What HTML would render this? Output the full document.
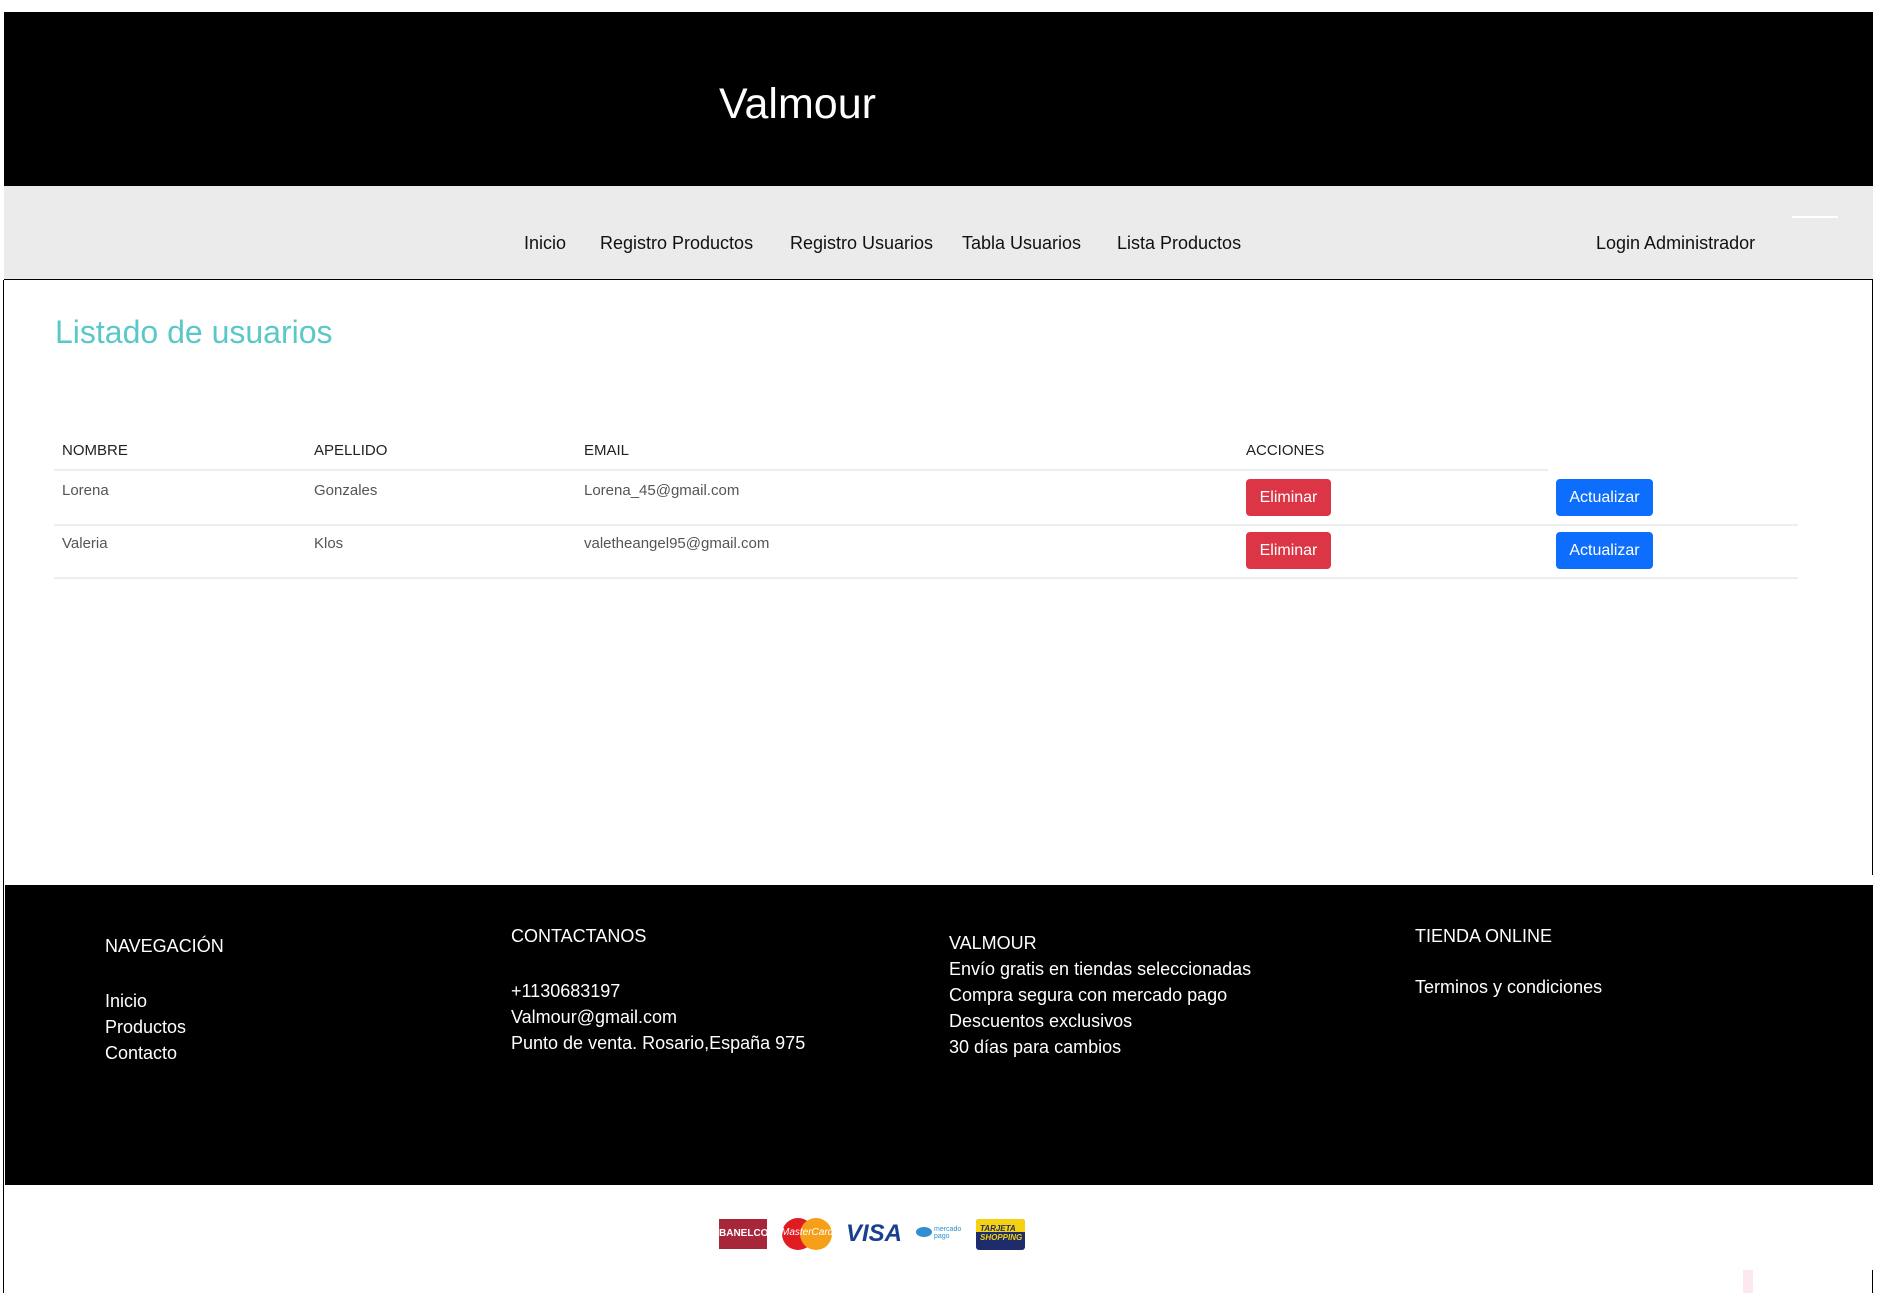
<!DOCTYPE html>
<html><head><meta charset="utf-8"><style>
*{margin:0;padding:0;box-sizing:border-box}
body{width:1877px;height:1293px;background:#fff;position:relative;overflow:hidden;font-family:"Liberation Sans","DejaVu Sans",sans-serif}
.a{position:absolute;white-space:nowrap}
#hdr{position:absolute;left:4px;top:12px;width:1869px;height:174px;background:#000}
#nav{position:absolute;left:4px;top:186px;width:1869px;height:94px;background:#ebebeb;border-bottom:1px solid #000}
.n{font-size:18px;color:#111;top:233px}
.th{font-size:15px;color:#222;top:442px}
.td{font-size:15px;color:#555}
.btn{position:absolute;height:37px;border-radius:4px;color:#fff;font-size:16px;line-height:37px;text-align:center}
.r{background:#dc3545;width:85px;left:1246px}
.b{background:#0d6efd;width:97px;left:1556px}
.line{position:absolute;height:2px;background:#eee}
#ftr{position:absolute;left:5px;top:885px;width:1868px;height:300px;background:#000}
.f{color:#fff;font-size:18px}
</style></head><body>
<div id="hdr"></div>
<div class="a" style="left:719px;top:80px;font-size:43px;color:#fff">Valmour</div>
<div id="nav"></div>
<div class="a n" style="left:524px">Inicio</div>
<div class="a n" style="left:600px">Registro Productos</div>
<div class="a n" style="left:790px">Registro Usuarios</div>
<div class="a n" style="left:962px">Tabla Usuarios</div>
<div class="a n" style="left:1117px">Lista Productos</div>
<div class="a n" style="left:1596px">Login Administrador</div>
<div class="a" style="left:1792px;top:216px;width:46px;height:2px;background:#fff"></div>
<div class="a" style="left:1872px;top:280px;width:1px;height:595px;background:#000"></div>
<div class="a" style="left:3px;top:280px;width:1px;height:1013px;background:#000"></div>
<div class="a" style="left:55px;top:314px;font-size:32px;color:#5bc8c8">Listado de usuarios</div>
<div class="a th" style="left:62px">NOMBRE</div>
<div class="a th" style="left:314px">APELLIDO</div>
<div class="a th" style="left:584px">EMAIL</div>
<div class="a th" style="left:1246px">ACCIONES</div>
<div class="line" style="left:54px;top:469px;width:1494px"></div>
<div class="a td" style="left:62px;top:482px">Lorena</div>
<div class="a td" style="left:314px;top:482px">Gonzales</div>
<div class="a td" style="left:584px;top:482px">Lorena_45@gmail.com</div>
<div class="btn r" style="top:479px">Eliminar</div>
<div class="btn b" style="top:479px">Actualizar</div>
<div class="line" style="left:54px;top:524px;width:1744px"></div>
<div class="a td" style="left:62px;top:535px">Valeria</div>
<div class="a td" style="left:314px;top:535px">Klos</div>
<div class="a td" style="left:584px;top:535px">valetheangel95@gmail.com</div>
<div class="btn r" style="top:532px">Eliminar</div>
<div class="btn b" style="top:532px">Actualizar</div>
<div class="line" style="left:54px;top:577px;width:1744px"></div>
<div id="ftr"></div>
<div class="a f" style="left:105px;top:936px">NAVEGACIÓN</div>
<div class="a f" style="left:105px;top:988px;line-height:26px">Inicio<br>Productos<br>Contacto</div>
<div class="a f" style="left:511px;top:926px">CONTACTANOS</div>
<div class="a f" style="left:511px;top:978px;line-height:26px">+1130683197<br>Valmour@gmail.com<br>Punto de venta. Rosario,España 975</div>
<div class="a f" style="left:949px;top:930px;line-height:26px">VALMOUR<br>Envío gratis en tiendas seleccionadas<br>Compra segura con mercado pago<br>Descuentos exclusivos<br>30 días para cambios</div>
<div class="a f" style="left:1415px;top:926px">TIENDA ONLINE</div>
<div class="a f" style="left:1415px;top:977px">Terminos y condiciones</div>
<div class="a" style="left:719px;top:1219px;width:48px;height:30px;background:#a8263a;color:#fff;font-size:10px;font-weight:bold;line-height:30px;text-align:center">BANELCO</div>
<div class="a" style="left:782px;top:1218px;width:32px;height:32px;border-radius:50%;background:#e01b22"></div>
<div class="a" style="left:800px;top:1218px;width:32px;height:32px;border-radius:50%;background:#f6a01a"></div>
<div class="a" style="left:781px;top:1227px;font-size:10px;color:#fff;font-style:italic">MasterCard</div>
<div class="a" style="left:846px;top:1220px;font-size:24px;font-weight:bold;font-style:italic;color:#1a3f91">VISA</div>
<div class="a" style="left:916px;top:1227px;width:16px;height:10px;border-radius:50%;background:#2e8fd1"></div>
<div class="a" style="left:934px;top:1226px;font-size:7px;color:#2e8fd1;line-height:7px">mercado<br>pago</div>
<div class="a" style="left:976px;top:1219px;width:49px;height:31px;border-radius:3px;background:#1e2c6b;overflow:hidden"><div style="height:13px;background:#f5d20f"></div></div>
<div class="a" style="left:980px;top:1224px;font-size:8px;font-weight:bold;font-style:italic;color:#1e2c6b;line-height:9px">TARJETA<br><span style="color:#f5d20f">SHOPPING</span></div>
<div class="a" style="left:1743px;top:1270px;width:10px;height:23px;background:#fde8ee"></div>
<div class="a" style="left:1872px;top:1270px;width:1px;height:23px;background:#000"></div>
</body></html>
